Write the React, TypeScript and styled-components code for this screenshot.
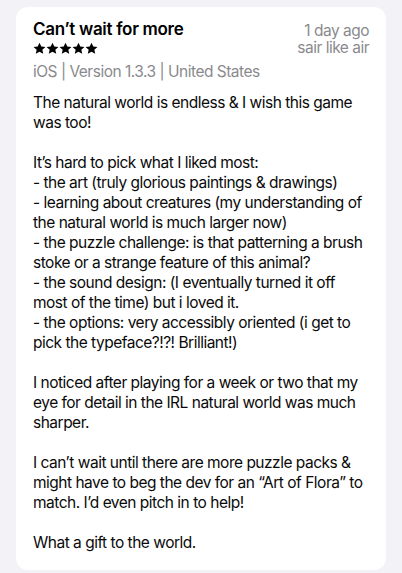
import React from 'react';
import styled, { createGlobalStyle } from 'styled-components';

const GlobalStyle = createGlobalStyle`
  html, body {
    margin: 0;
    padding: 0;
    background: #f2f2f7;
  }
  body {
    font-family: Inter, "Noto Sans", "Liberation Sans", sans-serif;
    -webkit-font-smoothing: antialiased;
  }
`;

const Page = styled.div`
  width: 402px;
  min-height: 573px;
  box-sizing: border-box;
  padding: 7px 16px 12px;
  background: #f2f2f7;
`;

const Card = styled.article`
  background: #ffffff;
  border-radius: 12px;
  padding: 11px 17px 17px;
`;

const Header = styled.header`
  display: flex;
  justify-content: space-between;
  align-items: flex-start;
`;

const TitleBlock = styled.div`
  display: flex;
  flex-direction: column;
`;

const Title = styled.h2`
  margin: 0;
  font-size: 17px;
  line-height: 22px;
  font-weight: 600;
  color: #000;
  letter-spacing: -0.3px;
`;

const Stars = styled.div`
  display: flex;
  margin-top: 2px;
`;

const MetaBlock = styled.div`
  display: flex;
  flex-direction: column;
  align-items: flex-end;
  padding-top: 4px;
`;

const Muted = styled.div`
  font-size: 15.5px;
  line-height: 17px;
  color: #8a8a8e;
  letter-spacing: -0.5px;
`;

const Platform = styled.div`
  margin-top: 6px;
  font-size: 15.5px;
  line-height: 20px;
  color: #8a8a8e;
  letter-spacing: -0.5px;
`;

const Body = styled.div`
  margin-top: 11px;
  font-size: 15.5px;
  line-height: 20px;
  color: #0a0a0a;
  letter-spacing: -0.5px;
`;

const Para = styled.p`
  margin: 0 0 20px;
  &:last-child {
    margin-bottom: 0;
  }
`;

const Star = () => (
  <svg width="13" height="13" viewBox="0 0 24 24" aria-hidden="true">
    <path
      fill="#000"
      d="M12 1.2l3.3 7.1 7.7.8-5.8 5.2 1.7 7.6L12 18l-6.9 3.9 1.7-7.6L1 9.1l7.7-.8z"
    />
  </svg>
);

const paragraphs: string[][] = [
  ['The natural world is endless & I wish this game was too!'],
  [
    'It\u2019s hard to pick what I liked most:',
    '- the art (truly glorious paintings & drawings)',
    '- learning about creatures (my understanding of the natural world is much larger now)',
    '- the puzzle challenge: is that patterning a brush stoke or a strange feature of this animal?',
    '- the sound design: (I eventually turned it off most of the time) but i loved it.',
    '- the options: very accessibly oriented (i get to pick the typeface?!?! Brilliant!)',
  ],
  ['I noticed after playing for a week or two that my eye for detail in the IRL natural world was much sharper.'],
  [
    'I can\u2019t wait until there are more puzzle packs & might have to beg the dev for an \u201cArt of Flora\u201d to match. I\u2019d even pitch in to help!',
  ],
  ['What a gift to the world.'],
];

export default function App() {
  return (
    <Page>
      <GlobalStyle />
      <Card>
        <Header>
          <TitleBlock>
            <Title>Can{'\u2019'}t wait for more</Title>
            <Stars>
              {[0, 1, 2, 3, 4].map((i) => (
                <Star key={i} />
              ))}
            </Stars>
          </TitleBlock>
          <MetaBlock>
            <Muted>1 day ago</Muted>
            <Muted>sair like air</Muted>
          </MetaBlock>
        </Header>
        <Platform>iOS | Version 1.3.3 | United States</Platform>
        <Body>
          {paragraphs.map((lines, i) => (
            <Para key={i}>
              {lines.map((l, j) => (
                <React.Fragment key={j}>
                  {j > 0 && <br />}
                  {l}
                </React.Fragment>
              ))}
            </Para>
          ))}
        </Body>
      </Card>
    </Page>
  );
}
